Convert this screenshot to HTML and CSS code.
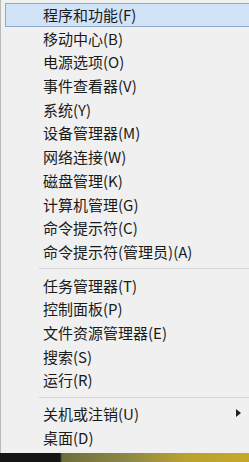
FILE: index.html
```html
<!DOCTYPE html>
<html lang="zh-CN">
<head>
<meta charset="utf-8">
<link rel="stylesheet" href="styles.css">
</head>
<body>
<div class="screen">
  <div class="menu">
    <div class="item active">程序和功能(F)</div>
    <div class="item">移动中心(B)</div>
    <div class="item">电源选项(O)</div>
    <div class="item">事件查看器(V)</div>
    <div class="item">系统(Y)</div>
    <div class="item">设备管理器(M)</div>
    <div class="item">网络连接(W)</div>
    <div class="item">磁盘管理(K)</div>
    <div class="item">计算机管理(G)</div>
    <div class="item">命令提示符(C)</div>
    <div class="item">命令提示符(管理员)(A)</div>
    <div class="sep"></div>
    <div class="item">任务管理器(T)</div>
    <div class="item">控制面板(P)</div>
    <div class="item">文件资源管理器(E)</div>
    <div class="item">搜索(S)</div>
    <div class="item">运行(R)</div>
    <div class="sep"></div>
    <div class="item sub">关机或注销(U)<span class="arrow"></span></div>
    <div class="item">桌面(D)</div>
  </div>
  <div class="taskbar"></div>
</div>
</body>
</html>
```
FILE: styles.css
```css
html, body {
  margin: 0;
  padding: 0;
  overflow: hidden;
  background: #161616;
}
.screen {
  width: 249px;
  height: 462px;
  display: flex;
  flex-direction: column;
}
.menu {
  box-sizing: border-box;
  height: 453px;
  background: #f0f0f0;
  border-left: 1px solid #b9b9b9;
  padding: 3px 0 3px 4px;
  display: flex;
  flex-direction: column;
  font-family: "Noto Sans CJK SC", "Noto Sans", sans-serif;
  font-size: 15px;
  color: #1a1a1a;
}
.item {
  box-sizing: border-box;
  height: 23.7px;
  line-height: 23.7px;
  padding-left: 37px;
  margin-right: -4px;
  position: relative;
  white-space: nowrap;
  border: 1px solid transparent;
  line-height: 21.7px;
}
.item.active {
  background: #d1e3f7;
  border-color: #8fa8c6;
}
.sep {
  height: 10px;
  display: flex;
  align-items: center;
  padding-left: 34px;
}
.sep::after {
  content: "";
  flex: 1;
  height: 1px;
  background: #d6d6d6;
}
.arrow {
  position: absolute;
  left: 230px;
  top: 6px;
  width: 0;
  height: 0;
  border-top: 4px solid transparent;
  border-bottom: 4px solid transparent;
  border-left: 5px solid #222;
}
.taskbar {
  flex: 1;
  background: linear-gradient(90deg, #151515 0, #151515 60px, #6f6d3c 62px, #8d8a45 130px, #b9a12e 185px, #c5a92a 249px);
}
```
